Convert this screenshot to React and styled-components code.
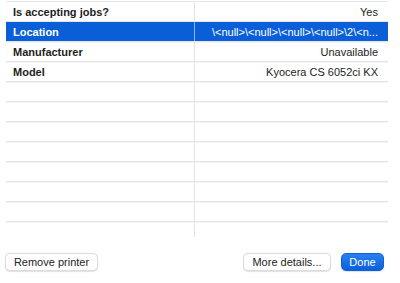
import React from 'react'
import styled, { createGlobalStyle } from 'styled-components'

const GlobalStyle = createGlobalStyle`
  html, body {
    margin: 0;
    padding: 0;
    background: #fff;
  }
  body {
    font-family: 'Liberation Sans', Arial, 'Noto Sans', sans-serif;
    -webkit-font-smoothing: antialiased;
  }
`

const Sheet = styled.div`
  width: 400px;
  height: 283px;
  background: #fff;
  display: flex;
  flex-direction: column;
`

const Table = styled.div`
  margin: 1px 12px 0 6px;
  height: 235px;
  display: flex;
  flex-direction: column;
  border-top: 1px solid #e8e8e8;
`

const Row = styled.div`
  display: grid;
  grid-template-columns: 189px 1fr;
  height: 19px;
  flex-shrink: 0;
  border-bottom: 1px solid #e6e6e6;
  box-shadow: 0 1px 0 #f4f4f4;
  background: ${(p) => (p.$selected ? '#0a5fd9' : 'transparent')};
  color: ${(p) => (p.$selected ? '#fff' : '#1d1d1d')};
`

const Filler = styled.div`
  flex: 1;
  display: grid;
  grid-template-columns: 189px 1fr;
`

const KeyCell = styled.div`
  display: flex;
  align-items: center;
  padding-left: 7px;
  font-size: 11px;
  font-weight: 700;
  border-right: 1px solid ${(p) => (p.$selected ? 'rgba(255,255,255,0.55)' : '#e3e3e3')};
`

const ValueCell = styled.div`
  display: flex;
  align-items: center;
  justify-content: flex-end;
  min-width: 0;
  padding: 0 10px 0 2px;
  font-size: 11px;
  white-space: nowrap;
`

const Footer = styled.div`
  display: flex;
  align-items: center;
  margin-top: 16px;
  padding: 0 16px 0 5px;
  gap: 10px;
`

const Spacer = styled.div`
  flex: 1;
`

const Button = styled.button`
  height: 18px;
  width: ${(p) => p.$w}px;
  padding: 0;
  border-radius: 5px;
  font-family: inherit;
  font-size: 11px;
  line-height: 16px;
  border: 1px solid ${(p) => (p.$primary ? '#0a62da' : '#dcdcdc')};
  background: ${(p) => (p.$primary ? 'linear-gradient(#2a7ff0, #0a60da)' : '#fff')};
  color: ${(p) => (p.$primary ? '#fff' : '#222')};
  box-shadow: 0 0.5px 1px rgba(0, 0, 0, 0.12);
`

const rows = [
  { key: 'Is accepting jobs?', value: 'Yes' },
  { key: 'Location', value: '\\<null>\\<null>\\<null>\\<null>\\2\\<n...', selected: true },
  { key: 'Manufacturer', value: 'Unavailable' },
  { key: 'Model', value: 'Kyocera CS 6052ci KX' },
]

export default function App() {
  const empty = Array.from({ length: 7 })
  return (
    <Sheet>
      <GlobalStyle />
      <Table>
        {rows.map((r) => (
          <Row key={r.key} $selected={r.selected}>
            <KeyCell $selected={r.selected}>{r.key}</KeyCell>
            <ValueCell>{r.value}</ValueCell>
          </Row>
        ))}
        {empty.map((_, i) => (
          <Row key={i}>
            <KeyCell />
            <ValueCell />
          </Row>
        ))}
        <Filler>
          <KeyCell />
          <div />
        </Filler>
      </Table>
      <Footer>
        <Button $w={93}>Remove printer</Button>
        <Spacer />
        <Button $w={88}>More details...</Button>
        <Button $w={43} $primary>
          Done
        </Button>
      </Footer>
    </Sheet>
  )
}
